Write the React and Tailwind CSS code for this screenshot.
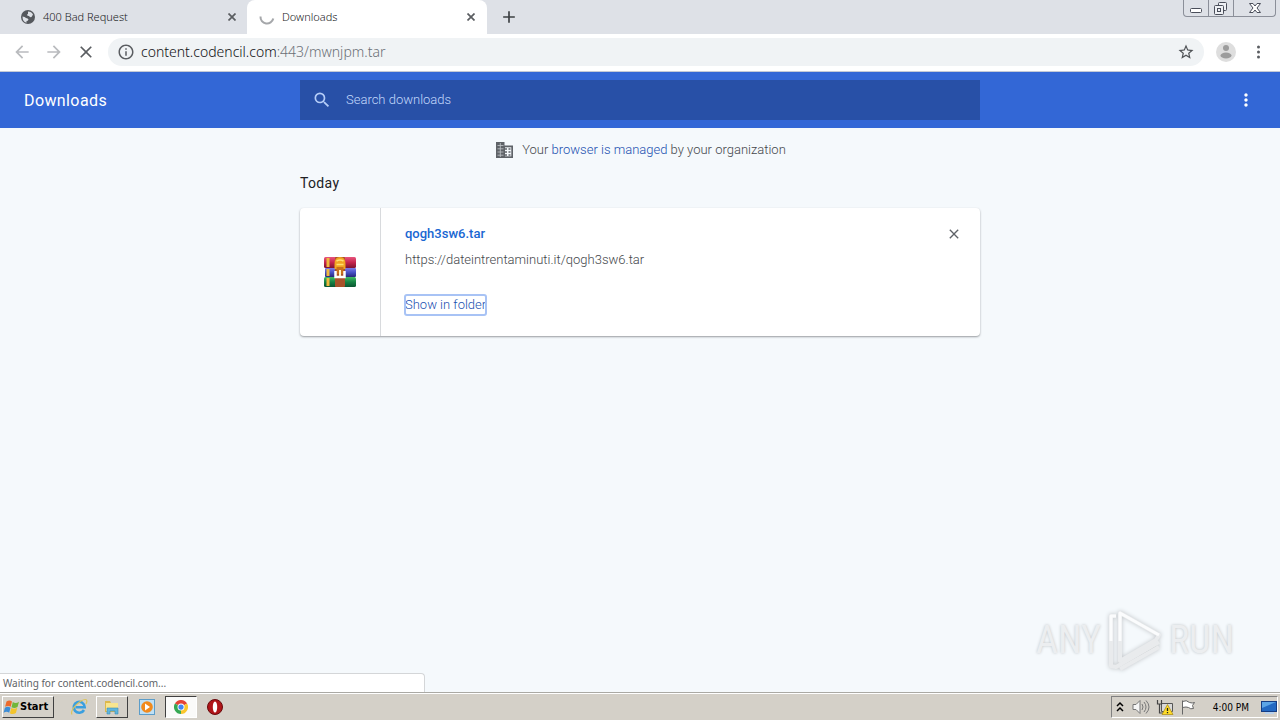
import React, { useState } from "react";
import {
  MdArrowBack,
  MdArrowForward,
  MdClose,
  MdInfoOutline,
  MdStarBorder,
  MdMoreVert,
  MdSearch,
  MdAdd,
} from "react-icons/md";

const App = () => {
  return (
    <div className="relative flex h-screen w-full flex-col overflow-hidden bg-[#f5f9fc] font-['Roboto',sans-serif]">
      <TabStrip />
      <Toolbar />
      <DownloadsHeader />
      <main className="relative flex-1">
        <DownloadsList />
        <Watermark />
        <div className="absolute bottom-0 left-0 flex h-[19px] w-[425px] items-center rounded-tr border-t border-r border-[#d4d6d8] bg-white px-[3px] font-['Noto_Sans',sans-serif] text-[10px] text-[#606367]">
          Waiting for content.codencil.com...
        </div>
      </main>
      <Taskbar />
    </div>
  );
};

const TabClose = ({ label }) => {
  return (
    <button type="button" aria-label={label} className="p-1">
      <svg viewBox="0 0 8 8" className="size-2" fill="none" stroke="#5a5d61" strokeWidth="1.700">
        <path d="M.5 .5l7 7M7.500 .5l-7 7" />
      </svg>
    </button>
  );
};

const TabStrip = () => {
  return (
    <div className="flex h-[34px] shrink-0 bg-[#dee1e7] font-['Noto_Sans',sans-serif] text-[11px] font-light text-[#202124]">
      <div className="flex w-[247px] items-center pr-[7px] pl-5">
        <svg viewBox="0 0 16 16" className="size-4">
          <circle cx="8" cy="8" r="7" fill="#55585d" />
          <path
            d="M2.500 7.500q2.500 0 3.500 1.500 2 0 2.500 1.500-.5 1.500-2 1.500v1.800Q2.500 13 2.500 7.500zM8 2.500q3.500 0 5 3-1 1.500-1.500 2.500-2 .5-2.500-1-2 0-2-1.500 1.500-.5 1-3z"
            fill="#dee1e7"
          />
        </svg>
        <span className="ml-[7px] flex-1">400 Bad Request</span>
        <TabClose label="Close 400 Bad Request" />
      </div>
      <div className="flex w-60 items-center rounded-t-lg bg-white pr-2 pl-3">
        <svg viewBox="0 0 16 16" className="size-4" fill="none" stroke="#a5a7aa" strokeWidth="2">
          <path d="M1.500 7.500A6.500 6.500 0 0 0 14.300 9.500" />
        </svg>
        <span className="ml-[7px] flex-1">Downloads</span>
        <TabClose label="Close Downloads" />
      </div>
      <button type="button" aria-label="New tab" className="ml-3 flex items-center">
        <MdAdd className="size-5 text-[#3c4043]" />
      </button>
      <WindowButtons />
    </div>
  );
};

const WindowButtons = () => {
  return (
    <div className="mr-1 ml-auto flex h-[17px] rounded-b border border-t-0 border-[#8b8f99] text-[#4a4e5a]">
      <button type="button" aria-label="Minimize" className="flex w-[25px] items-center justify-center border-r border-[#8b8f99]">
        <svg viewBox="0 0 24 16" className="h-4 w-6" fill="#fff" stroke="currentColor">
          <rect x="6.500" y="8.500" width="11" height="4" rx="1" />
        </svg>
      </button>
      <button type="button" aria-label="Restore" className="flex w-[25px] items-center justify-center border-r border-[#8b8f99]">
        <svg viewBox="0 0 24 16" className="h-4 w-6" fill="#eef0f4" stroke="currentColor">
          <rect x="9.500" y="2.500" width="8" height="8" rx="1" />
          <rect x="5.500" y="5.500" width="9" height="9" rx="1" />
          <rect x="8.500" y="8.500" width="3" height="3" />
        </svg>
      </button>
      <button type="button" aria-label="Close" className="flex w-[41px] items-center justify-center">
        <svg viewBox="0 0 14 14" className="size-[14px]" fill="#fff" stroke="currentColor">
          <path d="M1.500 2.500h3.500l2 2.500 2-2.500h3.500l-3.500 4.500 3.500 4.500h-3.500l-2-2.500-2 2.500h-3.500l3.500-4.500z" />
        </svg>
      </button>
    </div>
  );
};

const Toolbar = () => {
  const [url, setUrl] = useState(":443/mwnjpm.tar");

  return (
    <div className="flex h-[38px] shrink-0 items-center border-b border-[#c4cad6] bg-white px-3 pb-px">
      <button type="button" aria-label="Back" className="mr-3">
        <MdArrowBack className="size-5 text-[#b9bbbe]" />
      </button>
      <button type="button" aria-label="Forward" className="mr-3">
        <MdArrowForward className="size-5 text-[#b9bbbe]" />
      </button>
      <button type="button" aria-label="Stop" className="mr-3">
        <MdClose className="size-5 text-[#5a5d61]" />
      </button>
      <div className="flex h-7 flex-1 items-center rounded-full bg-[#f0f3f5] px-[9px] font-['Noto_Sans',sans-serif] text-sm font-light">
        <MdInfoOutline className="size-[18px] text-[#5a5d61]" />
        <label htmlFor="url" className="ml-1.5 text-[#101114]">
          content.codencil.com
        </label>
        <input
          id="url"
          type="text"
          value={url}
          onChange={(ev) => setUrl(ev.target.value)}
          className="min-w-0 flex-1 bg-transparent text-[#6b7075] outline-none"
        />
        <button type="button" aria-label="Bookmark">
          <MdStarBorder className="size-[18px] text-[#4f5256]" />
        </button>
      </div>
      <button type="button" aria-label="Profile" className="mr-3 ml-3">
        <svg viewBox="0 0 20 20" className="size-5">
          <circle cx="10" cy="10" r="10" fill="#dedede" />
          <circle cx="10" cy="6" r="3" fill="#9c9c9c" />
          <ellipse cx="10" cy="13.500" rx="5.500" ry="3" fill="#9c9c9c" />
        </svg>
      </button>
      <button type="button" aria-label="Chrome menu">
        <svg viewBox="0 0 20 20" className="size-5" fill="#5a5d61">
          <circle cx="10.500" cy="5" r="1.500" />
          <circle cx="10.500" cy="10" r="1.500" />
          <circle cx="10.500" cy="15" r="1.500" />
        </svg>
      </button>
    </div>
  );
};

const DownloadsHeader = () => {
  const [search, setSearch] = useState("");

  return (
    <header className="grid h-14 shrink-0 grid-cols-[1fr_minmax(0,680px)_1fr] items-center bg-[#3367d6] text-white">
      <h1 className="pt-0.5 pl-6 text-base tracking-wide">Downloads</h1>
      <div className="flex h-10 items-center bg-[#2850a7] px-3">
        <MdSearch className="size-5 text-[#b5cdf8]" />
        <input
          type="text"
          aria-label="Search downloads"
          placeholder="Search downloads"
          value={search}
          onChange={(ev) => setSearch(ev.target.value)}
          className="ml-[14px] flex-1 bg-transparent text-[13px] font-light outline-none placeholder:text-[#c3d8fb]"
        />
      </div>
      <button type="button" aria-label="More actions" className="mr-6 justify-self-end">
        <MdMoreVert className="size-5" />
      </button>
    </header>
  );
};

const DownloadsList = () => {
  return (
    <div className="mx-auto max-w-[680px] text-[13px] font-light">
      <div className="flex h-11 items-center justify-center text-[#44474b]">
        <svg viewBox="0 0 20 20" className="mr-2 size-5">
          <path d="M2 2h8.500v3.500H19V18H2z" fill="#5f6368" />
          <path
            d="M3.500 5.500h6M3.500 8.800h6M3.500 12h6M3.500 15.200h6M6.300 3v14"
            stroke="#c4c8cb"
            strokeWidth=".8"
          />
          <path d="M11 7.300h6.300v9H11z" fill="#f5f9fc" />
          <path d="M11 9h2M11 12h2M11 15h2M14.500 9h2M14.500 12h2M14.500 15h2" stroke="#5f6368" strokeWidth="1.500" />
        </svg>
        <p>
          Your{" "}
          <a href="#managed" className="text-[#1a50b0]">
            browser is managed
          </a>{" "}
          by your organization
        </p>
      </div>
      <h2 className="mb-[14px] text-sm leading-[22px] font-normal tracking-wide text-[#202124]">Today</h2>
      <section className="flex h-32 rounded bg-white shadow-[0_1px_2px_rgba(60,64,67,0.5)]">
        <div className="flex w-[81px] items-center justify-center border-r border-[#d8dadd]">
          <ArchiveIcon />
        </div>
        <div className="flex flex-1 flex-col items-start px-6 pt-4 leading-5">
          <a href="#file" className="font-medium text-[#1967d2]">
            qogh3sw6.tar
          </a>
          <p className="mt-1.5 text-[#44474b]">https://dateintrentaminuti.it/qogh3sw6.tar</p>
          <button
            type="button"
            className="mt-[25px] rounded-xs text-[#1a50b0] outline-2 -outline-offset-1 outline-[#a8c3f5]"
          >
            Show in folder
          </button>
        </div>
        <button type="button" aria-label="Remove from list" className="mt-[18px] mr-[18px] self-start">
          <MdClose className="size-4 text-[#5f6368]" />
        </button>
      </section>
    </div>
  );
};

// three stacked books held by a belt
const ArchiveIcon = () => {
  return (
    <svg viewBox="0 0 32 32" className="size-8">
      <defs>
        <linearGradient id="red" x2="0" y2="1">
          <stop stopColor="#e8557d" />
          <stop offset=".5" stopColor="#c4244d" />
          <stop offset="1" stopColor="#7d1330" />
        </linearGradient>
        <linearGradient id="blue" x2="0" y2="1">
          <stop stopColor="#7d7be8" />
          <stop offset=".5" stopColor="#4650c4" />
          <stop offset="1" stopColor="#28287a" />
        </linearGradient>
        <linearGradient id="green" x2="0" y2="1">
          <stop stopColor="#42bd64" />
          <stop offset=".5" stopColor="#168244" />
          <stop offset="1" stopColor="#0b5532" />
        </linearGradient>
      </defs>
      <rect y="1" width="32" height="11" rx="1.500" fill="url(#red)" />
      <rect x="1" y="12" width="31" height="9" rx="1" fill="url(#blue)" />
      <rect y="21" width="32" height="10" rx="1.500" fill="url(#green)" />
      <path d="M4 2v9M4 13v7M4 22v8" stroke="#efb83e" strokeWidth="3" />
      <rect x="11" y="1" width="10" height="30" rx="1" fill="#a9522a" />
      <path d="M10.500 8q0-7 5.500-7t5.500 7v5h-11z" fill="#f0a522" />
      <path d="M12.500 5q3.500-2 7 0M12.500 8.500h7" fill="none" stroke="#ffdf72" strokeWidth="1.500" />
      <path d="M12.500 11h7v7h-7z" fill="#c8701c" />
      <path d="M11.500 15v6h9v-6" fill="none" stroke="#fff" strokeWidth="2.500" />
      <path d="M16 14v6" stroke="#fff3c4" strokeWidth="2" />
    </svg>
  );
};

const Watermark = () => {
  return (
    <div className="absolute right-[46px] bottom-5 flex items-center gap-1 font-['Liberation_Sans_Narrow','Roboto_Condensed',sans-serif] text-[38px] text-[#eceef0] [text-shadow:0_0_3px_#bfc3c6]">
      <span>ANY</span>
      <svg
        viewBox="0 0 60 64"
        className="h-16 w-[60px] drop-shadow-[0_0_2px_#bfc3c6]"
        fill="none"
        stroke="#e9ebed"
        strokeWidth="4"
        strokeLinejoin="round"
      >
        <path d="M11 8H6v50l5 1 43-25" />
        <path d="M15 61l39-22" />
        <path d="M15 53V5l39 22-3 5z" />
        <path d="M6 33V8h5M15 33V5l39 22" stroke="#fbfcfd" strokeWidth="3" />
      </svg>
      <span>RUN</span>
    </div>
  );
};

const Taskbar = () => {
  return (
    <footer className="flex h-7 shrink-0 items-center border-t border-[#aaa9a4] bg-[#d4d0c8] px-0.5 pt-px shadow-[inset_0_1px_0_#fff]">
      <button
        type="button"
        className="flex h-[22px] w-[52px] items-center border border-t-white border-r-[#404040] border-b-[#404040] border-l-white font-['DejaVu_Sans_Condensed','DejaVu_Sans',sans-serif] text-[11px] font-bold text-black"
      >
        <svg viewBox="0 0 17 17" className="size-[17px] shrink-0">
          <path d="M3.500 2.500q3-2.200 5.500 0L7.700 7.800q-2.500-1.800-5.600 0z" fill="#ed6a2c" />
          <path d="M9.800 3q3 2 6.200-.3l-1.500 5.200q-3 1.900-6 .3z" fill="#72b63b" />
          <path d="M1.900 8.700q3-1.800 5.600 0L6.200 13.700q-2.600-2-5.600 0z" fill="#3d8dd6" />
          <path d="M8.300 9.100q3 1.600 6-.3L12.900 14q-3 2-6 .2z" fill="#f3c42c" />
        </svg>
        Start
      </button>
      <button type="button" aria-label="Internet Explorer" className="ml-[11px] flex w-7 justify-center">
        <svg viewBox="0 0 18 18" className="size-[18px]" fill="none">
          <path d="M14 12a5.500 5.500 0 1 1 .7-2.800H5.500" stroke="#3a9fdf" strokeWidth="2.600" />
          <path d="M2 16.500C-.5 12 10 1.500 15.500 1.500c2 0 1.500 2.500.5 4.500" stroke="#dcc35b" strokeWidth="1.200" />
        </svg>
      </button>
      <button
        type="button"
        aria-label="Explorer"
        className="ml-[3px] flex h-[22px] w-8 items-center justify-center border border-t-white border-r-[#404040] border-b-[#404040] border-l-white"
      >
        <svg viewBox="0 0 18 18" className="size-[18px]">
          <path d="M2 3h5l1 2h7v9H2z" fill="#ddb84c" />
          <path d="M3 5h12v8H3z" fill="#f9e58e" />
          <path d="M4 16v-6h11v6h-3v-3H7v3z" fill="#60b5dc" stroke="#3b8db8" strokeWidth=".6" />
        </svg>
      </button>
      <button type="button" aria-label="Media Player" className="ml-1 flex w-[30px] justify-center">
        <svg viewBox="0 0 16 16" className="size-4">
          <rect x=".5" y=".5" width="15" height="15" fill="#bfe0f5" stroke="#5c9dc9" />
          <circle cx="8" cy="8" r="5.800" fill="#f18a1d" />
          <path d="M6 4.500v7l5-3.500z" fill="#fff" />
        </svg>
      </button>
      <button
        type="button"
        aria-label="Chrome"
        className="ml-[3px] flex h-[22px] w-8 items-center justify-center border border-t-[#404040] border-r-white border-b-white border-l-[#404040] bg-[#fafaf9]"
      >
        <svg viewBox="0 0 16 16" className="size-[14px]">
          <path d="M8 8L1.070 4A8 8 0 0 1 14.930 4z" fill="#e54335" />
          <path d="M8 8l6.930-4A8 8 0 0 1 8 16z" fill="#fac62d" />
          <path d="M8 8v8A8 8 0 0 1 1.070 4z" fill="#35a853" />
          <circle cx="8" cy="8" r="4" fill="#fff" />
          <circle cx="8" cy="8" r="3" fill="#4285f4" />
        </svg>
      </button>
      <button type="button" aria-label="Opera" className="ml-[3px] flex w-[30px] justify-center">
        <svg viewBox="0 0 16 16" className="size-4">
          <circle cx="8" cy="8" r="7.500" fill="#b01518" stroke="#68090c" />
          <ellipse cx="8" cy="8" rx="2.200" ry="5.500" fill="#fff" />
        </svg>
      </button>
      <div className="ml-auto flex h-[22px] items-center border border-t-[#808080] border-r-white border-b-white border-l-[#808080] pl-1 font-['DejaVu_Sans_Condensed','DejaVu_Sans',sans-serif] text-[10px] text-black">
        <svg viewBox="0 0 8 12" className="mr-2 h-3 w-2" fill="none" stroke="#000" strokeWidth="1.500">
          <path d="M1 5l3-3 3 3M1 10l3-3 3 3" />
        </svg>
        <svg viewBox="0 0 18 16" className="mr-1.5 h-4 w-[18px]" fill="#f5f5f5" stroke="#777">
          <path d="M1 5.500h3l4-4v13l-4-4H1z" />
          <path d="M10 5q2 3 0 6M12 3q4 5 0 10M14 1.500q6 6.500 0 13" fill="none" />
        </svg>
        <svg viewBox="0 0 18 16" className="mr-1.5 h-4 w-[18px]">
          <path d="M5.500 4.500h11v8h-11z" fill="#d9d9d9" stroke="#555" />
          <path d="M1.500 1v4h4V1M3.500 5v9h7" fill="none" stroke="#444" strokeWidth="1.200" />
          <path d="M11.500 5.500l5.500 10H6z" fill="#ffdc27" stroke="#a9860d" strokeWidth=".7" />
          <path d="M11.500 9v3M11.500 13v1.200" stroke="#222" strokeWidth="1.300" />
        </svg>
        <svg viewBox="0 0 17 16" className="mr-4 h-4 w-[17px]" fill="#fff" stroke="#666">
          <path d="M2.500 15.500v-14M2.500 2.500q4-2 7 1 3 1 5 0l-2 3 1 3q-3 1-5-1-2-1-6 0" />
        </svg>
        <span>4:00 PM</span>
        <svg viewBox="0 0 16 16" className="ml-3 size-4">
          <rect x=".5" y="2.500" width="15" height="10" fill="#2369c2" stroke="#153d84" />
          <path d="M1 3h14L1 9z" fill="#5ca5e6" />
          <path d="M4 14h9" stroke="#b9d2ed" strokeWidth="2" />
        </svg>
      </div>
    </footer>
  );
};

export default App;
